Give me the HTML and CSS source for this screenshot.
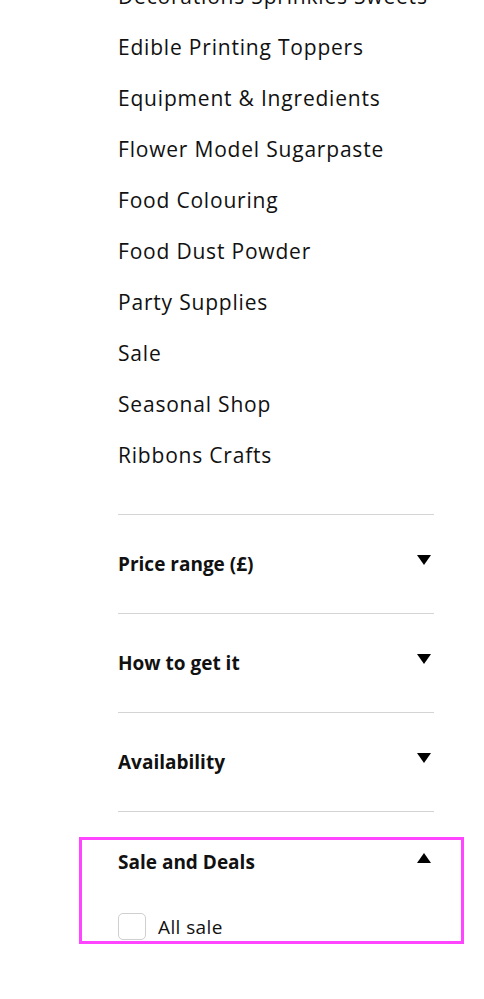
FILE: index.html
```html
<!DOCTYPE html>
<html lang="en">
<head>
    <meta charset="UTF-8">
    <meta name="viewport" content="width=device-width, initial-scale=1.0">
    <title>Shop filters</title>
    <link rel="stylesheet" href="styles.css">
</head>
<body>

    <div class="filters">
        <ul class="categories">
            <li>Decorations Sprinkles Sweets</li>
            <li>Edible Printing Toppers</li>
            <li>Equipment &amp; Ingredients</li>
            <li>Flower Model Sugarpaste</li>
            <li>Food Colouring</li>
            <li>Food Dust Powder</li>
            <li>Party Supplies</li>
            <li>Sale</li>
            <li>Seasonal Shop</li>
            <li>Ribbons Crafts</li>
        </ul>

        <div class="section">
            <div class="section-head">
                <span>Price range (£)</span>
                <span class="arrow down"></span>
            </div>
        </div>

        <div class="section">
            <div class="section-head">
                <span>How to get it</span>
                <span class="arrow down"></span>
            </div>
        </div>

        <div class="section">
            <div class="section-head">
                <span>Availability</span>
                <span class="arrow down"></span>
            </div>
        </div>

        <div class="section open">
            <div class="highlight">
                <div class="section-head">
                    <span>Sale and Deals</span>
                    <span class="arrow up"></span>
                </div>
                <label class="option">
                    <span class="checkbox"></span>
                    <span>All sale</span>
                </label>
            </div>
        </div>
    </div>

</body>
</html>
```

FILE: styles.css
```css
body {
    margin: 0;
    font-family: "Open Sans", "Liberation Sans", sans-serif;
    color: #111;
    background: #fff;
}

.filters {
    width: 316px;
    margin-left: 118px;
    margin-top: -29px;
}

.categories {
    list-style: none;
    margin: 0 0 33px 0;
    padding: 0;
}

.categories li {
    font-size: 21px;
    letter-spacing: 0.8px;
    line-height: 51px;
    height: 51px;
    white-space: nowrap;
}

.section {
    border-top: 1px solid #d4d4d4;
}

.section-head {
    display: flex;
    justify-content: space-between;
    align-items: center;
    height: 98px;
    font-size: 19px;
    font-weight: 700;
}

.arrow {
    width: 0;
    height: 0;
    border-left: 7px solid transparent;
    border-right: 7px solid transparent;
    margin-right: 3px;
    margin-top: -8px;
}

.arrow.down {
    border-top: 10px solid #000;
}

.arrow.up {
    border-bottom: 10px solid #000;
}

.open {
    padding-top: 25px;
}

.highlight {
    border: 3px solid #ff45ff;
    margin: 0 -30px 0 -39px;
    padding: 0 27px 0 36px;
}

.open .section-head {
    height: 44px;
}

.option {
    display: flex;
    align-items: center;
    gap: 12px;
    padding-top: 29px;
    padding-bottom: 1px;
    font-size: 19px;
    letter-spacing: 0.4px;
}

.checkbox {
    width: 26px;
    height: 25px;
    border: 1px solid #cfcfcf;
    border-radius: 5px;
}
```
